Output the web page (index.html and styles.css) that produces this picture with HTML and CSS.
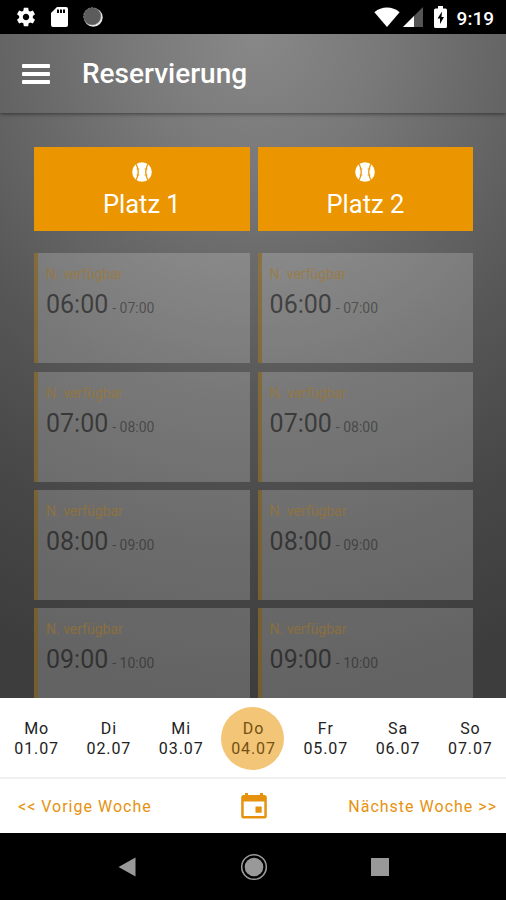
FILE: index.html
```html
<!DOCTYPE html>
<html lang="de">
<head>
    <meta charset="UTF-8">
    <meta name="viewport" content="width=device-width, initial-scale=1.0">
    <title>Reservierung</title>
    <link rel="stylesheet" href="styles.css">
</head>
<body>
    <div class="status-bar">
        <svg class="icon-gear" width="22" height="22" viewBox="0 0 24 24" fill="#fff"><path d="M19.43 12.98c.04-.32.07-.64.07-.98s-.03-.66-.07-.98l2.11-1.65c.19-.15.24-.42.12-.64l-2-3.46c-.12-.22-.39-.3-.61-.22l-2.49 1c-.52-.4-1.08-.73-1.69-.98l-.38-2.65C14.46 2.18 14.25 2 14 2h-4c-.25 0-.46.18-.49.42l-.38 2.65c-.61.25-1.17.59-1.69.98l-2.49-1c-.23-.09-.49 0-.61.22l-2 3.46c-.13.22-.07.49.12.64l2.11 1.65c-.04.32-.07.65-.07.98s.03.66.07.98l-2.11 1.65c-.19.15-.24.42-.12.64l2 3.46c.12.22.39.3.61.22l2.49-1c.52.4 1.08.73 1.69.98l.38 2.65c.03.24.24.42.49.42h4c.25 0 .46-.18.49-.42l.38-2.65c.61-.25 1.17-.59 1.69-.98l2.49 1c.23.09.49 0 .61-.22l2-3.46c.12-.22.07-.49-.12-.64l-2.11-1.65zM12 15.5c-1.93 0-3.5-1.57-3.5-3.5s1.57-3.5 3.5-3.5 3.5 1.57 3.5 3.5-1.57 3.5-3.5 3.5z"/></svg>
        <svg class="icon-sd" width="17" height="20" viewBox="0 0 17 20"><path fill="#fff" d="M6 0h9a2 2 0 0 1 2 2v16a2 2 0 0 1-2 2H2a2 2 0 0 1-2-2V6z"/><path fill="#000" d="M6 2.5h2v3.5H6zM9 2.5h2v3.5H9zM12 2.5h2v3.5h-2z"/></svg>
        <svg class="icon-sync" width="20" height="20" viewBox="0 0 20 20"><circle cx="10.3" cy="10.3" r="9.4" fill="#e8e8e8"/><circle cx="9.2" cy="9.2" r="8.8" fill="#5c5c5c"/><circle cx="9.2" cy="9.2" r="8.5" fill="none" stroke="#888" stroke-dasharray="2 1.5" stroke-width=".8"/></svg>
        <div class="status-right">
            <svg width="26" height="20" viewBox="0 0 26 20"><path fill="#fff" d="M.4 5.2C7.5-1 18.5-1 25.6 5.2L13 20z"/></svg>
            <svg class="icon-signal" width="20" height="20" viewBox="0 0 20 20"><path fill="#555" d="M20 0v20H0z"/><path fill="#fff" d="M11 9v11H0z"/></svg>
            <svg class="icon-battery" width="13" height="22" viewBox="0 0 13 22"><path fill="#fff" d="M4 0h5v2.5h2.5A1.5 1.5 0 0 1 13 4v16.5a1.5 1.5 0 0 1-1.5 1.5h-10A1.5 1.5 0 0 1 0 20.5V4a1.5 1.5 0 0 1 1.5-1.5H4z"/><path fill="#000" d="M8 5.5L3.5 12.5H6V18l4-7H7.5z"/></svg>
            <span class="clock">9:19</span>
        </div>
    </div>

    <div class="page">
        <div class="toolbar">
            <div class="menu"><span></span><span></span><span></span></div>
            <h1>Reservierung</h1>
        </div>

        <div class="courts">
            <div class="court">
                <svg width="20" height="20" viewBox="0 0 20 20"><circle cx="10" cy="10" r="9.8" fill="#fff"/><path d="M4.2 2.2Q8.3 10 4.2 17.8M15.8 2.2Q11.7 10 15.8 17.8" fill="none" stroke="#eb9600" stroke-width="1.3"/><path d="M4.5 7H7.5M4.5 13H7.5M12.5 7H15.5M12.5 13H15.5" stroke="#eb9600" stroke-width=".7"/></svg>
                <span>Platz 1</span>
            </div>
            <div class="court">
                <svg width="20" height="20" viewBox="0 0 20 20"><circle cx="10" cy="10" r="9.8" fill="#fff"/><path d="M4.2 2.2Q8.3 10 4.2 17.8M15.8 2.2Q11.7 10 15.8 17.8" fill="none" stroke="#eb9600" stroke-width="1.3"/><path d="M4.5 7H7.5M4.5 13H7.5M12.5 7H15.5M12.5 13H15.5" stroke="#eb9600" stroke-width=".7"/></svg>
                <span>Platz 2</span>
            </div>
        </div>

        <div class="slots">
            <div class="slot"><div class="state">N. verfügbar</div><div class="time">06:00<small>- 07:00</small></div></div>
            <div class="slot"><div class="state">N. verfügbar</div><div class="time">06:00<small>- 07:00</small></div></div>
            <div class="slot"><div class="state">N. verfügbar</div><div class="time">07:00<small>- 08:00</small></div></div>
            <div class="slot"><div class="state">N. verfügbar</div><div class="time">07:00<small>- 08:00</small></div></div>
            <div class="slot"><div class="state">N. verfügbar</div><div class="time">08:00<small>- 09:00</small></div></div>
            <div class="slot"><div class="state">N. verfügbar</div><div class="time">08:00<small>- 09:00</small></div></div>
            <div class="slot"><div class="state">N. verfügbar</div><div class="time">09:00<small>- 10:00</small></div></div>
            <div class="slot"><div class="state">N. verfügbar</div><div class="time">09:00<small>- 10:00</small></div></div>
        </div>
    </div>

    <div class="days">
        <div class="day"><span>Mo</span><span>01.07</span></div>
        <div class="day"><span>Di</span><span>02.07</span></div>
        <div class="day"><span>Mi</span><span>03.07</span></div>
        <div class="day active"><span>Do</span><span>04.07</span></div>
        <div class="day"><span>Fr</span><span>05.07</span></div>
        <div class="day"><span>Sa</span><span>06.07</span></div>
        <div class="day"><span>So</span><span>07.07</span></div>
    </div>

    <div class="weeks">
        <a class="week">&lt;&lt; Vorige Woche</a>
        <svg width="26" height="26" viewBox="0 0 26 26" fill="#e6920f"><path fill-rule="evenodd" d="M4 0h3v2h12V0h3v2h1.3A2.5 2.5 0 0 1 25.8 4.5v18.5a2.5 2.5 0 0 1-2.5 2.5H2.7A2.5 2.5 0 0 1 .2 23V4.5A2.5 2.5 0 0 1 2.7 2H4zM2.7 8.5V23h20.6V8.5z"/><path d="M14.5 13.5h6.2v6.2h-6.2z"/></svg>
        <a class="week next">Nächste Woche &gt;&gt;</a>
    </div>

    <div class="nav-bar">
        <svg width="18" height="20" viewBox="0 0 18 20"><path fill="#999" d="M17.5.5v19L.5 10z"/></svg>
        <svg width="28" height="28" viewBox="0 0 28 28"><circle cx="14" cy="14" r="12.3" fill="none" stroke="#999" stroke-width="1.6"/><circle cx="14" cy="14" r="9.3" fill="#999"/></svg>
        <svg width="18" height="18" viewBox="0 0 18 18"><path fill="#999" d="M0 0h18v18H0z"/></svg>
    </div>
</body>
</html>
```
FILE: styles.css
```css
* {
    box-sizing: border-box;
}

body {
    font-family: Roboto, sans-serif;
    margin: 0;
    height: 900px;
    display: flex;
    flex-direction: column;
    overflow: hidden;
    background-color: #000;
}

.status-bar {
    height: 34px;
    flex: none;
    display: flex;
    align-items: center;
    padding: 0 12px 0 15px;
    background-color: #000;
}

.icon-sd {
    margin-left: 14px;
}

.icon-sync {
    margin-left: 15px;
}

.status-right {
    margin-left: auto;
    display: flex;
    align-items: center;
}

.icon-signal {
    margin-left: 3px;
}

.icon-battery {
    margin-left: 11px;
}

.clock {
    margin-left: 10px;
    padding-top: 2px;
    color: #fff;
    font-size: 19px;
    font-weight: 500;
}

.page {
    height: 664px;
    flex: none;
    overflow: hidden;
    background: radial-gradient(ellipse 620px 660px at 255px 0, #888 0%, #797979 20%, #696969 36%, #575757 55%, #474747 78%, #3d3d3d 100%);
}

.toolbar {
    height: 79px;
    display: flex;
    align-items: center;
    padding-left: 22px;
    box-shadow: 0 1px 4px rgba(0, 0, 0, 0.5);
}

.menu {
    display: flex;
    flex-direction: column;
    gap: 4px;
    width: 28px;
}

.menu span {
    height: 4px;
    border-radius: 1px;
    background-color: #fff;
}

h1 {
    margin: 0 0 0 32px;
    color: #fff;
    font-size: 28px;
    font-weight: 500;
}

.courts,
.slots {
    display: grid;
    grid-template-columns: 215.6px 215.6px;
    gap: 8px;
    padding-left: 34px;
}

.courts {
    margin-top: 34px;
}

.court {
    height: 84px;
    display: flex;
    flex-direction: column;
    align-items: center;
    padding-top: 15px;
    background-color: #eb9600;
    color: #fff;
    font-size: 25.5px;
    line-height: 44px;
}

.court svg {
    flex: none;
}

.slots {
    margin-top: 22.4px;
    row-gap: 8.2px;
}

.slot {
    height: 110px;
    padding: 11px 8px;
    border-left: 4px solid rgba(165, 120, 35, 0.55);
    background-color: rgba(255, 255, 255, 0.2);
    background-clip: padding-box;
}

.state {
    color: rgba(165, 118, 30, 0.6);
    font-size: 14px;
    line-height: 20px;
}

.time {
    color: rgba(0, 0, 0, 0.52);
    font-size: 25px;
    line-height: 42px;
}

.time small {
    margin-left: 4px;
    color: rgba(0, 0, 0, 0.4);
    font-size: 14px;
}

.days {
    height: 81px;
    flex: none;
    display: grid;
    grid-template-columns: repeat(7, 1fr);
    align-items: center;
    justify-items: center;
    padding-top: 2px;
    border-bottom: 2px solid #f0f0f0;
    background-color: #fff;
}

.day {
    width: 63px;
    height: 63px;
    display: flex;
    flex-direction: column;
    align-items: center;
    justify-content: center;
    padding-left: 1px;
    border-radius: 50%;
    color: #222;
    font-size: 16px;
    line-height: 19.5px;
    letter-spacing: 0.9px;
}

.day.active {
    background-color: #f3c577;
    color: #735112;
}

.weeks {
    height: 54px;
    flex: none;
    display: grid;
    grid-template-columns: 1fr 26px 1fr;
    align-items: center;
    padding: 0 9px 0 18px;
    background-color: #fff;
}

.weeks svg {
    margin-left: -4px;
}

.week {
    color: #e6920f;
    font-size: 16px;
    letter-spacing: 1px;
}

.next {
    text-align: right;
}

.nav-bar {
    height: 68px;
    flex: none;
    display: flex;
    align-items: center;
    justify-content: space-between;
    padding: 0 117px 0 118px;
    background-color: #000;
}
```
